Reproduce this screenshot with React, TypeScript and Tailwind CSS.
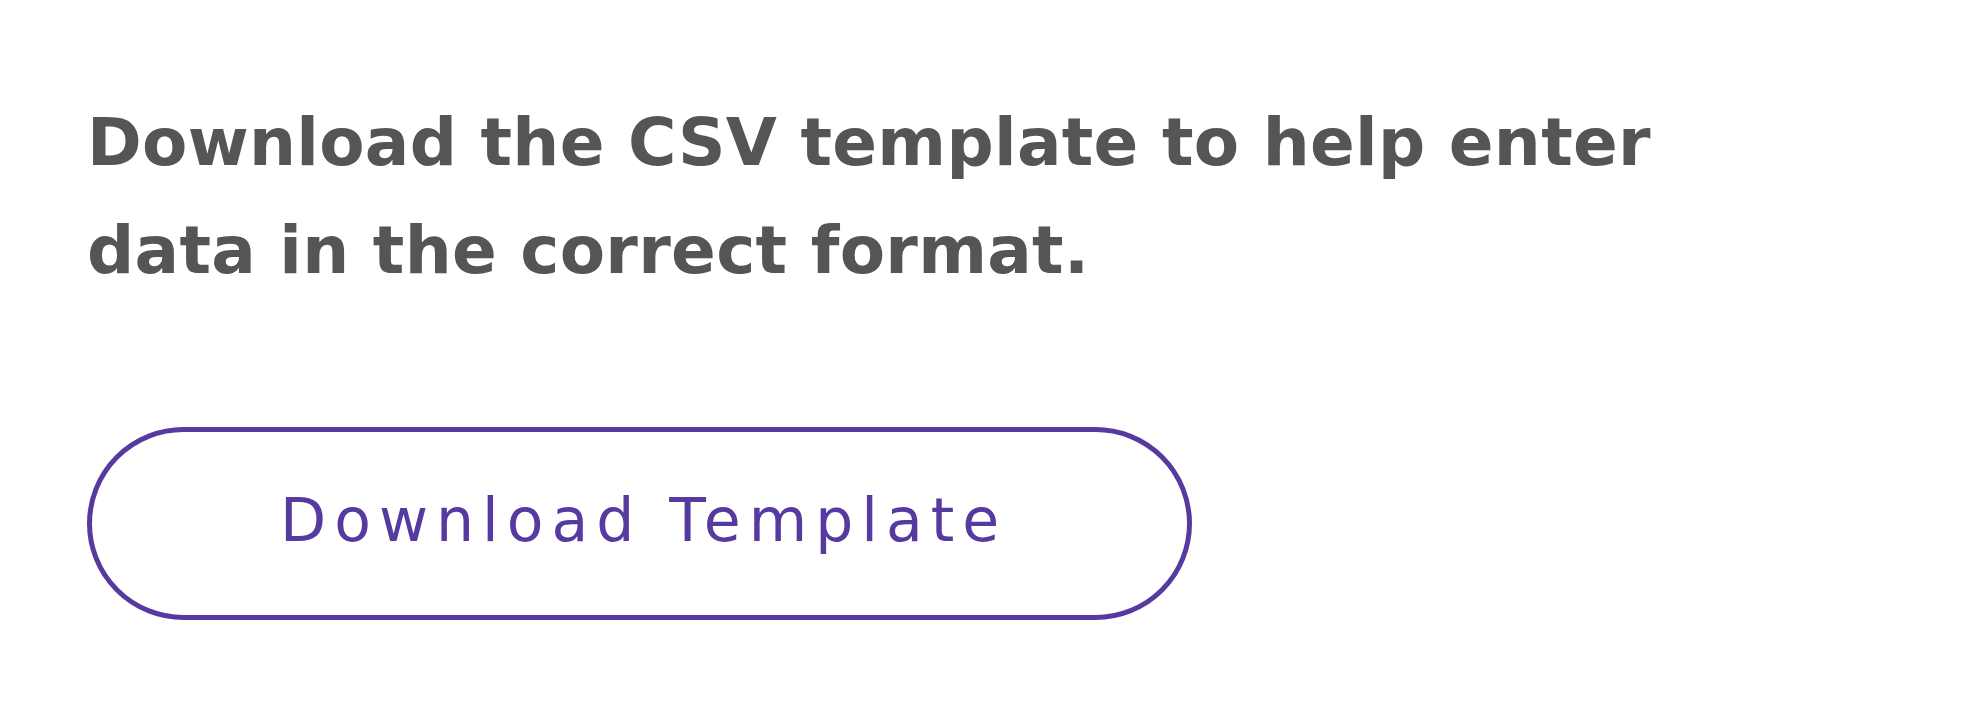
import React from "react";

export default function App() {
  return (
    <div className="flex min-h-[716px] w-[1985px] flex-col items-start bg-white pl-[87px] pt-[89px] font-['DejaVu_Sans',sans-serif]">
      <p className="m-0 text-[66px] font-bold leading-[108px] tracking-[0.3px] text-[#555555]">
        Download the CSV template to help enter
        <br />
        data in the correct format.
      </p>
      <button
        type="button"
        className="mt-[122px] flex h-[193px] w-[1105px] items-center rounded-full border-[5px] border-solid border-[#563aa0] bg-white pb-[7px] pl-[188px] font-['DejaVu_Sans',sans-serif] text-[60px] font-normal tracking-[8px] text-[#563aa0]"
      >
        Download Template
      </button>
    </div>
  );
}
